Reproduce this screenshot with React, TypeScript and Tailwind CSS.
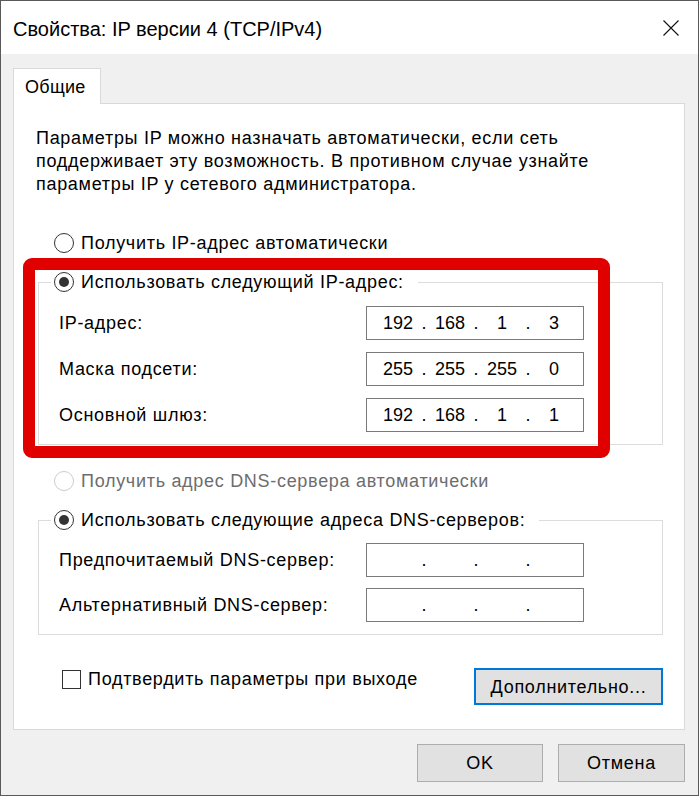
import React from 'react';

const FONT = "font-['Segoe_UI','Liberation_Sans',Arial,sans-serif]";

function Radio({ checked, disabled }: { checked?: boolean; disabled?: boolean }) {
  return (
    <span
      className={`w-[20px] h-[20px] rounded-full border bg-white flex items-center justify-center shrink-0 ${
        disabled ? 'border-[#cccccc]' : 'border-[#333333]'
      }`}
    >
      {checked && <span className="w-[10px] h-[10px] rounded-full bg-[#333333]" />}
    </span>
  );
}

function IpField({ parts }: { parts: string[] }) {
  return (
    <div className="w-[218px] h-[34px] border border-[#7a7a7a] bg-white flex items-center pl-[8px] text-[18px] tracking-normal text-black shrink-0">
      {parts.map((p, i) => (
        <React.Fragment key={i}>
          <span className="w-[46px] text-center">{p}</span>
          {i < 3 && <span className="w-[6px] text-center">.</span>}
        </React.Fragment>
      ))}
    </div>
  );
}

function Row({ label, parts }: { label: string; parts: string[] }) {
  return (
    <div className="flex items-center pl-[20px]">
      <span className="w-[307px] shrink-0 whitespace-nowrap">{label}</span>
      <IpField parts={parts} />
    </div>
  );
}

export default function App() {
  const empty = ['', '', '', ''];

  return (
    <div className={`w-[699px] h-[796px] border border-[#595959] bg-[#f0f0f0] flex flex-col text-black ${FONT}`}>
      {/* Title bar */}
      <div className="h-[53px] bg-white flex items-center justify-between pl-[12px] pr-[19px] pt-[2px] shrink-0">
        <span className="text-[20px] whitespace-nowrap">Свойства: IP версии 4 (TCP/IPv4)</span>
        <svg width="16" height="16" viewBox="0 0 16 16" className="mb-[2px]">
          <path d="M0.5 0.5 L15.5 15.5 M15.5 0.5 L0.5 15.5" stroke="#111111" strokeWidth="1.1" fill="none" />
        </svg>
      </div>

      <div className="flex-1 flex flex-col pl-[12px] pr-[13px] pt-[14px] text-[18px] leading-[24px] tracking-[0.7px]">
        {/* Tabs */}
        <div className="flex">
          <div className="relative z-10 -mb-px h-[36px] w-[88px] bg-white border border-b-0 border-[#d9d9d9] flex items-center pl-[11px] tracking-[0.3px]">
            Общие
          </div>
        </div>

        {/* Tab panel */}
        <div className="relative h-[627px] bg-white border border-[#d9d9d9] flex flex-col">
          <p className="ml-[22px] mt-[23px] leading-[23px] whitespace-nowrap">
            Параметры IP можно назначать автоматически, если сеть
            <br />
            поддерживает эту возможность. В противном случае узнайте
            <br />
            параметры IP у сетевого администратора.
          </p>

          <div className="ml-[40px] mt-[35px] h-[24px] flex items-center gap-[7px]">
            <Radio />
            <span>Получить IP-адрес автоматически</span>
          </div>

          <fieldset className="ml-[24px] mt-[15px] w-[625px] border border-[#dcdcdc] pb-[12px]">
            <legend className="ml-[12px] pl-[3px] pr-[14px] h-[24px] flex items-center gap-[7px]">
              <Radio checked />
              <span className="whitespace-nowrap">Использовать следующий IP-адрес:</span>
            </legend>
            <div className="flex flex-col gap-[12px] pt-[12px]">
              <Row label="IP-адрес:" parts={['192', '168', '1', '3']} />
              <Row label="Маска подсети:" parts={['255', '255', '255', '0']} />
              <Row label="Основной шлюз:" parts={['192', '168', '1', '1']} />
            </div>
          </fieldset>

          <div className="ml-[40px] mt-[24px] h-[24px] flex items-center gap-[7px] text-[#6d6d6d]">
            <Radio disabled />
            <span>Получить адрес DNS-сервера автоматически</span>
          </div>

          <fieldset className="ml-[24px] mt-[15px] w-[625px] border border-[#dcdcdc] pb-[12px]">
            <legend className="ml-[12px] pl-[3px] pr-[14px] h-[24px] flex items-center gap-[7px]">
              <Radio checked />
              <span className="whitespace-nowrap">Использовать следующие адреса DNS-серверов:</span>
            </legend>
            <div className="flex flex-col gap-[11px] pt-[11px]">
              <Row label="Предпочитаемый DNS-сервер:" parts={empty} />
              <Row label="Альтернативный DNS-сервер:" parts={empty} />
            </div>
          </fieldset>

          <div className="mt-[33px] flex items-start">
            <div className="ml-[48px] -mt-px h-[24px] flex items-center gap-[7px]">
              <span className="w-[19px] h-[19px] border border-[#333333] bg-white shrink-0" />
              <span className="whitespace-nowrap">Подтвердить параметры при выходе</span>
            </div>
            <button className="ml-auto mr-[21px] w-[189px] h-[37px] border-2 border-[#0078d7] bg-[#e1e1e1] flex items-center justify-center">
              Дополнительно...
            </button>
          </div>

          {/* highlight frame */}
          <div className="absolute left-[9px] top-[154px] w-[587px] h-[200px] border-[12px] border-[#e10000] rounded-[9px] pointer-events-none" />
        </div>

        {/* Dialog buttons */}
        <div className="mt-[14px] flex justify-end gap-[15px]">
          <button className="w-[126px] h-[38px] border border-[#adadad] bg-[#e1e1e1] flex items-center justify-center">
            OK
          </button>
          <button className="w-[127px] h-[38px] border border-[#adadad] bg-[#e1e1e1] flex items-center justify-center">
            Отмена
          </button>
        </div>
      </div>
    </div>
  );
}
